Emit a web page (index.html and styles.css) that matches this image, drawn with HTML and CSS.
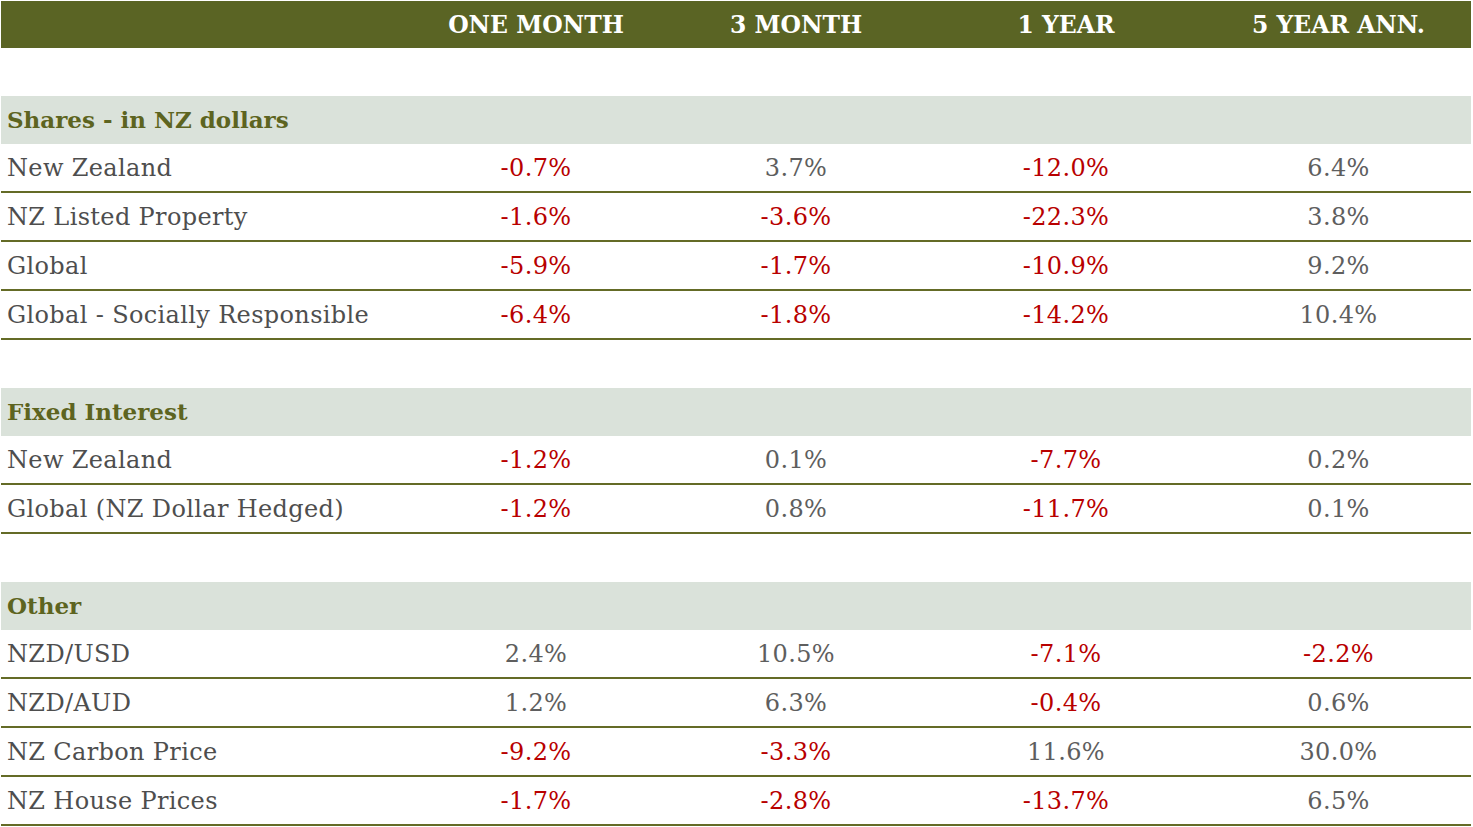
FILE: index.html
```html
<!DOCTYPE html>
<html>
<head>
<meta charset="utf-8">
<link rel="stylesheet" href="styles.css">
</head>
<body>
<table class="perf">
  <colgroup>
    <col class="c-label"><col class="c-1"><col class="c-2"><col class="c-3"><col class="c-4">
  </colgroup>
  <thead>
    <tr class="head">
      <th></th><th>ONE MONTH</th><th>3 MONTH</th><th>1 YEAR</th><th>5 YEAR ANN.</th>
    </tr>
  </thead>
  <tbody>
    <tr class="spacer"><td colspan="5"></td></tr>
    <tr class="section"><td colspan="5">Shares - in NZ dollars</td></tr>
    <tr class="row"><td>New Zealand</td><td class="neg">-0.7%</td><td>3.7%</td><td class="neg">-12.0%</td><td>6.4%</td></tr>
    <tr class="row"><td>NZ Listed Property</td><td class="neg">-1.6%</td><td class="neg">-3.6%</td><td class="neg">-22.3%</td><td>3.8%</td></tr>
    <tr class="row"><td>Global</td><td class="neg">-5.9%</td><td class="neg">-1.7%</td><td class="neg">-10.9%</td><td>9.2%</td></tr>
    <tr class="row"><td>Global - Socially Responsible</td><td class="neg">-6.4%</td><td class="neg">-1.8%</td><td class="neg">-14.2%</td><td>10.4%</td></tr>
    <tr class="spacer"><td colspan="5"></td></tr>
    <tr class="section"><td colspan="5">Fixed Interest</td></tr>
    <tr class="row"><td>New Zealand</td><td class="neg">-1.2%</td><td>0.1%</td><td class="neg">-7.7%</td><td>0.2%</td></tr>
    <tr class="row"><td>Global (NZ Dollar Hedged)</td><td class="neg">-1.2%</td><td>0.8%</td><td class="neg">-11.7%</td><td>0.1%</td></tr>
    <tr class="spacer"><td colspan="5"></td></tr>
    <tr class="section"><td colspan="5">Other</td></tr>
    <tr class="row"><td>NZD/USD</td><td>2.4%</td><td>10.5%</td><td class="neg">-7.1%</td><td class="neg">-2.2%</td></tr>
    <tr class="row"><td>NZD/AUD</td><td>1.2%</td><td>6.3%</td><td class="neg">-0.4%</td><td>0.6%</td></tr>
    <tr class="row"><td>NZ Carbon Price</td><td class="neg">-9.2%</td><td class="neg">-3.3%</td><td>11.6%</td><td>30.0%</td></tr>
    <tr class="row"><td>NZ House Prices</td><td class="neg">-1.7%</td><td class="neg">-2.8%</td><td class="neg">-13.7%</td><td>6.5%</td></tr>
  </tbody>
</table>
</body>
</html>
```

FILE: styles.css
```css
html, body {
  margin: 0;
  padding: 0;
  background: #ffffff;
}
body {
  padding: 1px 1px 0 1px;
  font-family: "DejaVu Serif", "Liberation Serif", serif;
}
.perf {
  width: 1470px;
  border-collapse: collapse;
  table-layout: fixed;
}
.c-label { width: 405px; }
.c-1 { width: 260px; }
.c-2 { width: 260px; }
.c-3 { width: 280px; }
.c-4 { width: 265px; }

.perf th, .perf td {
  padding: 0;
}
.head th {
  background: #5a6424;
  color: #ffffff;
  font-weight: bold;
  font-size: 23.5px;
  height: 47px;
  text-align: center;
  vertical-align: middle;
}
.spacer td {
  height: 47.5px;
}
.section td {
  background: #dae2da;
  color: #5d6420;
  font-weight: bold;
  font-size: 23px;
  height: 48.5px;
  padding-left: 6px;
  vertical-align: middle;
}
.row td {
  height: 47px;
  border-bottom: 2px solid #646b26;
  font-size: 24px;
  letter-spacing: 0.35px;
  color: #5e5e5e;
  text-align: center;
  vertical-align: middle;
}
.row td:first-child {
  text-align: left;
  padding-left: 6px;
  color: #4e4e4e;
}
.row td.neg {
  color: #b80000;
}
```
